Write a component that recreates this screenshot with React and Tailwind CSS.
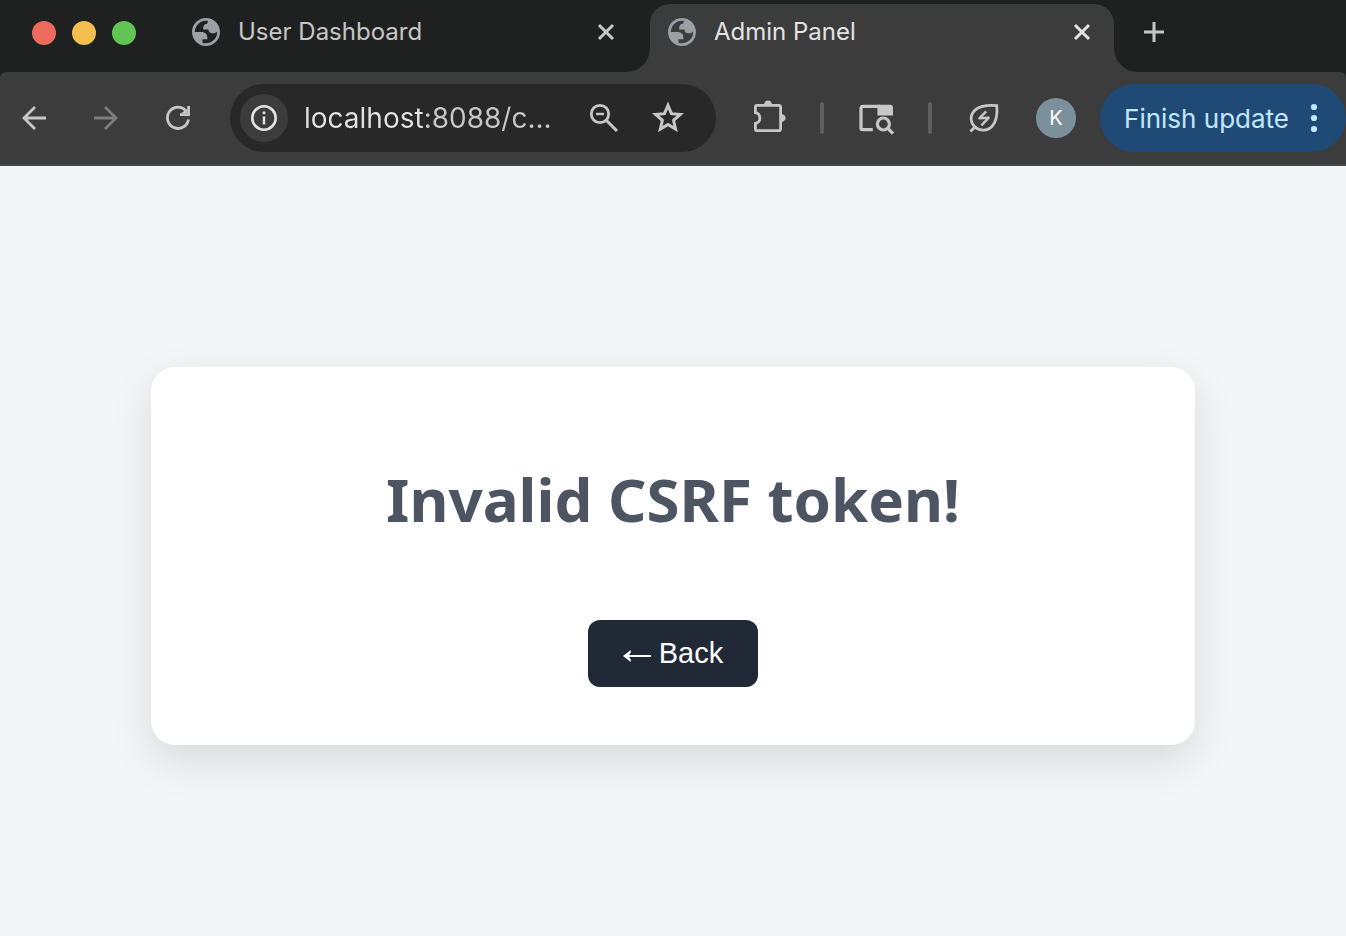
import React from "react";

function Globe() {
  return (
    <svg viewBox="2 2 20 20" className="size-7 shrink-0" fill="#9aa0a6" aria-hidden="true">
      <path
        fillRule="evenodd"
        d="M12 2C6.48 2 2 6.48 2 12s4.48 10 10 10 10-4.48 10-10S17.52 2 12 2zM4 12h4.4c3.407.022 4.922 1.73 4.543 5.127H9.488v2.47a8.004 8.004 0 0 0 10.498-8.08C19.327 12.507 18.332 13 17 13c-2.137 0-3.206-.916-3.206-2.75h-3.748c-.274-2.728.683-4.092 2.87-4.092 0-.975.327-1.597.811-1.97A8.004 8.004 0 0 0 4 12z"
      />
    </svg>
  );
}

function Icon({ children, className = "" }) {
  return (
    <svg
      viewBox="0 0 36 36"
      className={"size-9 " + className}
      fill="none"
      stroke="currentColor"
      strokeWidth="2.8"
      aria-hidden="true"
    >
      {children}
    </svg>
  );
}

function Flare({ className }) {
  return (
    <svg viewBox="0 0 24 24" className={"absolute bottom-0 size-6 " + className} fill="#3c3c3c" aria-hidden="true">
      <path d="M24 0V24H0A24 24 0 0 0 24 0Z" />
    </svg>
  );
}

function Tab({ title, active }) {
  return (
    <div
      className={
        active
          ? "relative flex h-[68px] w-[464px] items-center rounded-t-[20px] bg-[#3c3c3c] pr-[14px] pb-3 pl-[18px] text-[#e3e3e3]"
          : "relative flex h-[68px] w-[464px] items-center pr-[14px] pb-3 pl-[18px] text-[#c7c7c7]"
      }
    >
      {active && <Flare className="right-full" />}
      {active && <Flare className="left-full -scale-x-100" />}
      <button type="button" role="tab" aria-selected={active} className="flex min-w-0 flex-1 items-center gap-[18px] text-left text-2xl">
        <Globe />
        <span className="truncate">{title}</span>
      </button>
      <button type="button" aria-label={"Close " + title}>
        <Icon>
          <path d="M11 11L25 25M25 11L11 25" strokeWidth="3" />
        </Icon>
      </button>
    </div>
  );
}

function TabStrip() {
  return (
    <div className="flex h-[72px] items-end bg-[#1f2120]">
      <div className="mr-[38px] ml-8 flex gap-4 pb-[27px]">
        <button type="button" aria-label="Close window" className="size-6 rounded-full bg-[#ec6a5e]" />
        <button type="button" aria-label="Minimize window" className="size-6 rounded-full bg-[#f4bf4f]" />
        <button type="button" aria-label="Zoom window" className="size-6 rounded-full bg-[#61c554]" />
      </div>
      <div role="tablist" className="flex gap-3">
        <Tab title="User Dashboard" active={false} />
        <Tab title="Admin Panel" active />
      </div>
      <button type="button" aria-label="New tab" className="mb-[22px] ml-[22px] text-[#c7c7c7]">
        <Icon>
          <path d="M18 8V28M8 18H28" strokeWidth="3" />
        </Icon>
      </button>
    </div>
  );
}

function Divider() {
  return <div className="h-8 w-1 shrink-0 rounded-full bg-[#5e5e5e]" />;
}

function Toolbar() {
  return (
    <div className="bg-[#1f2120]">
      <div className="flex h-[94px] items-start rounded-t-md border-b-2 border-[#474546] bg-[#3c3c3c] pt-3 text-[#c7c7c7]">
        <div className="mr-[34px] ml-4 flex h-[68px] shrink-0 items-center gap-9">
          <button type="button" aria-label="Back">
            <Icon>
              <path d="M30 18H8M19 7L8 18L19 29" />
            </Icon>
          </button>
          <button type="button" aria-label="Forward" className="text-[#7c7c7c]">
            <Icon>
              <path d="M6 18H28M17 7L28 18L17 29" />
            </Icon>
          </button>
          <button type="button" aria-label="Reload">
            <Icon>
              <path d="M28.5 19.5A10.6 10.6 0 1 1 25.8 10.6" />
              <path d="M30 6V16H20V13.2H27.2V6Z" fill="currentColor" stroke="none" />
              <path d="M21 13.2H27.2V9Z" fill="currentColor" stroke="none" />
            </Icon>
          </button>
        </div>

        <div className="flex h-[68px] min-w-0 flex-1 items-center rounded-full bg-[#282828] pr-[30px] pl-[10px]">
          <button
            type="button"
            aria-label="View site information"
            className="flex size-12 shrink-0 items-center justify-center rounded-full bg-[#3c3c3c] text-[#e3e3e3]"
          >
            <Icon>
              <circle cx="18" cy="18" r="11.7" strokeWidth="2.6" />
              <path d="M18 16.4V24.4" strokeWidth="2.4" />
              <circle cx="18" cy="12.8" r="1.5" fill="currentColor" stroke="none" />
            </Icon>
          </button>
          <input
            type="text"
            aria-label="Address"
            defaultValue="localhost:8088/c..."
            className="ml-4 min-w-0 flex-1 bg-[linear-gradient(90deg,#e3e3e3_119px,#c7c7c7_119px)] bg-clip-text text-[28px] text-transparent outline-none"
          />
          <button type="button" aria-label="Zoom" className="mr-7 shrink-0">
            <Icon>
              <circle cx="14" cy="14" r="8.7" />
              <path d="M20 20L31 31" strokeWidth="3" />
              <path d="M10 14H18" strokeWidth="2.4" />
            </Icon>
          </button>
          <button type="button" aria-label="Bookmark this tab" className="shrink-0">
            <Icon>
              <path
                d="M18 6.6L21.1 14L29 14.7L23 19.9L24.8 27.7L18 23.6L11.2 27.7L13 19.9L7 14.7L14.9 14Z"
                transform="translate(-2.2 -2) scale(1.12)"
                strokeWidth="2.7"
              />
            </Icon>
          </button>
        </div>

        <div className="ml-9 flex h-[68px] shrink-0 items-center gap-[34px]">
          <button type="button" aria-label="Extensions" className="-mr-0.5">
            <Icon>
              <g transform="translate(0 -2)">
                <path d="M3.4 14.6V8.9A1.5 1.5 0 0 1 4.9 7.4H27.1A1.5 1.5 0 0 1 28.6 8.9V31.1A1.5 1.5 0 0 1 27.1 32.6H4.9A1.5 1.5 0 0 1 3.4 31.1V25.4A5.5 5.5 0 0 0 3.4 14.6Z" />
                <path d="M12 7A4 4.6 0 0 1 20 7ZM29 16A4.6 4 0 0 1 29 24Z" fill="currentColor" stroke="none" />
              </g>
            </Icon>
          </button>
          <Divider />
          <button type="button" aria-label="Search this page">
            <Icon>
              <path d="M14.8 29.6H4.6A1.6 1.6 0 0 1 3 28V7.9A1.6 1.6 0 0 1 4.6 6.3H22" strokeWidth="3.2" />
              <path d="M19.4 4.7H32.4A2.6 2.6 0 0 1 35 7.3V15.4H19.4Z" fill="currentColor" stroke="none" />
              <circle cx="25.4" cy="24" r="6" strokeWidth="3.2" />
              <path d="M29.6 28.2L35 33.6" strokeWidth="3.2" />
            </Icon>
          </button>
          <Divider />
          <button type="button" aria-label="Energy saver">
            <Icon>
              <path d="M30.8 5.6C24 5 15.5 5.2 10.2 9.2C3.8 14 3.6 21.5 8.8 26.8C13.5 31.4 21.5 31.2 26.1 26.2C30.8 21.2 31.4 12.5 30.8 5.6Z" />
              <path d="M4.4 31.4L9 27" />
              <path d="M20.2 11.4L13.4 18.3L22.6 17.8L15.4 25.4" strokeWidth="2.4" strokeLinejoin="round" />
            </Icon>
          </button>
          <button
            type="button"
            aria-label="Profile K"
            className="size-10 rounded-full bg-[#7c909c] text-xl text-white"
          >
            K
          </button>
        </div>

        <button
          type="button"
          className="ml-6 flex h-[68px] shrink-0 items-center gap-2 rounded-full bg-[#1f4a75] pr-[13px] pl-6 text-[26px] text-[#c2e7ff]"
        >
          Finish update
          <Icon>
            <g fill="currentColor" stroke="none">
              <circle cx="17" cy="7" r="3.1" />
              <circle cx="17" cy="18" r="3.1" />
              <circle cx="17" cy="29" r="3.1" />
            </g>
          </Icon>
        </button>
      </div>
    </div>
  );
}

export default function App() {
  return (
    <div className="flex min-h-screen flex-col bg-[#f4f5f7] font-[Inter,sans-serif]">
      <header>
        <TabStrip />
        <Toolbar />
      </header>
      <main className="flex flex-1 items-center px-[151px] pt-[10px]">
        <section className="flex w-full flex-col items-center rounded-3xl bg-white pt-[92px] pb-[58px] shadow-[0_16px_44px_rgba(0,0,0,0.11)]">
          <h1 className="text-center font-['Noto_Sans',sans-serif] text-[60px] leading-20 font-bold text-[#4d5562]">
            Invalid CSRF token!
          </h1>
          <a
            href="#back"
            className="mt-[81px] flex h-[67px] items-center gap-2 rounded-xl bg-[#212936] px-[35px] font-['Liberation_Sans',sans-serif] text-[29px] text-white"
          >
            <svg viewBox="0 0 28 16" className="mt-1 h-4 w-7" fill="currentColor" aria-hidden="true">
              <path d="M0 8L7.4 2.2L8.2 3.4L6.2 7H28V9H6.2L8.2 12.6L7.4 13.8Z" />
            </svg>
            Back
          </a>
        </section>
      </main>
    </div>
  );
}
